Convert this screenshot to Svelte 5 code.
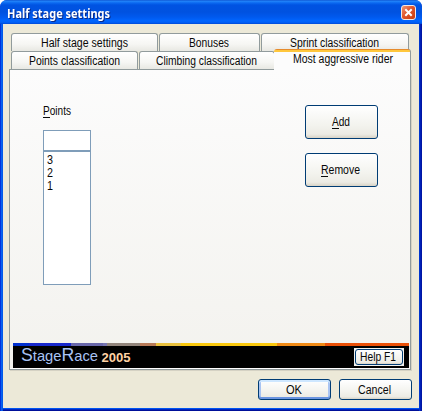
<script>
  const backTabs = [
    { text: 'Half stage settings', w: 147, tw: 87 },
    { text: 'Bonuses', w: 101, tw: 40 },
    { text: 'Sprint classification', w: 148, tw: 89 }
  ];
  const frontTabs = [
    { text: 'Points classification', w: 127, tw: 91 },
    { text: 'Climbing classification', w: 136, tw: 101 }
  ];
  const points = ['3', '2', '1'];
</script>

{#snippet label(text, w, accel = '')}
  <svg class="label" width={w} height="16"><text x="0" y="12" textLength={w} lengthAdjust="spacingAndGlyphs">{accel}{text}</text>{#if accel}<rect x="0" y="14" width="7" height="1" />{/if}</svg>
{/snippet}

<div class="window">
  <header>
    <svg class="title" width="110" height="20"><text x="0" y="13" textLength="103" lengthAdjust="spacingAndGlyphs">Half stage settings</text></svg>
    <button class="close" aria-label="Close">
      <svg width="13" height="13" viewBox="0 0 13 13"><path d="M3.3 3.3 L9.7 9.7 M9.7 3.3 L3.3 9.7" stroke="#fff" stroke-width="2" /></svg>
    </button>
  </header>
  <main>
    <div class="row back">
      {#each backTabs as t}
        <div class="tab" style="width:{t.w}px">{@render label(t.text, t.tw)}</div>
      {/each}
    </div>
    <div class="row front">
      {#each frontTabs as t}
        <div class="tab" style="width:{t.w}px">{@render label(t.text, t.tw)}</div>
      {/each}
      <div class="active">{@render label('Most aggressive rider', 100)}</div>
    </div>
    <section class="panel">
      <div class="body">
        <div class="list">
          {@render label('oints', 28, 'P')}
          <div class="field"></div>
          <div class="items">
            {#each points as p}<div class="item">{@render label(p, 6)}</div>{/each}
          </div>
        </div>
        <div class="actions">
          <button class="btn big">{@render label('dd', 18, 'A')}</button>
          <button class="btn big">{@render label('emove', 39, 'R')}</button>
        </div>
      </div>
      <div class="stripe"></div>
      <div class="brand">
        <svg class="logo" width="120" height="22">
          <text x="0" y="15" textLength="77" lengthAdjust="spacingAndGlyphs"><tspan class="cap">S</tspan>tage<tspan class="cap">R</tspan>ace</text>
          <text class="year" x="80.5" y="16" textLength="29" lengthAdjust="spacingAndGlyphs">2005</text>
        </svg>
        <div class="helpwrap"><button class="btn help">{@render label('Help F1', 36)}</button></div>
      </div>
    </section>
    <footer>
      <button class="btn ok">{@render label('OK', 16)}</button>
      <button class="btn">{@render label('Cancel', 33)}</button>
    </footer>
  </main>
</div>

<style>
  :global(body) { background: #fff; }
  .window {
    box-sizing: border-box;
    width: 422px;
    height: 411px;
    padding: 0 3px 3px;
    border-radius: 7px 7px 0 0;
    background: linear-gradient(90deg, #0031dc 0, #0031dc 1px, #0867f4 1px, #0054e6 3px, #0046dc 419px, #0025c0 420px, #00109a 422px);
    overflow: hidden;
  }
  header {
    box-sizing: border-box;
    height: 24px;
    margin: 0 -3px;
    padding: 5px 6px 0 7px;
    display: flex;
    justify-content: space-between;
    background: linear-gradient(#0848c8 0, #2487fa 1px, #0a68f0 3px, #0053e2 5px, #0052e0 12px, #0059ee 17px, #0066ff 21px, #005bf0 23px, #0045cf 24px);
  }
  .title { font: bold 12.5px "Noto Sans", sans-serif; fill: #fff; overflow: visible; filter: drop-shadow(1px 1px 0 #0a2a88); }
  .close {
    width: 15px;
    height: 15px;
    padding: 0;
    border: 1px solid #f4e8e4;
    border-radius: 3px;
    background: linear-gradient(135deg, #ee9a78, #e0552c 45%, #c93c0c);
  }
  .close svg { display: block; }
  main { height: 384px; background: #ece9d8; display: flex; flex-direction: column; box-shadow: 0 1px #0054f0, 0 2px #0025c0, 0 3px #00109a; }
  .label { display: block; overflow: visible; flex: none; font: 12px "Liberation Sans", Arial, sans-serif; fill: #080808; }
  .row { display: flex; }
  .back { margin: 9px 0 0 8px; gap: 1px; height: 18px; }
  .front { margin-left: 8px; gap: 1px; height: 18px; }
  .tab {
    box-sizing: border-box;
    height: 18px;
    padding: 1px 1px 0 0;
    border: 1px solid #919b9c;
    border-bottom: 0;
    border-radius: 3px 3px 0 0;
    background: linear-gradient(#fff, #f6f6f3 60%, #e8e8e2);
    display: flex;
    justify-content: center;
  }
  .active {
    position: relative;
    box-sizing: border-box;
    width: 137px;
    height: 21px;
    margin: -2px 0 0 -2px;
    padding: 2px 0 0 2px;
    border: solid #919b9c;
    border-width: 0 1px 0 0;
    background: linear-gradient(#e68b2c 1px, #ffc73c 1px, #ffc73c 3px, #fcfcfc 3px);
    border-radius: 3px 3px 0 0;
    display: flex;
    justify-content: center;
  }
  .panel {
    box-sizing: border-box;
    width: 402px;
    height: 301px;
    margin-left: 6px;
    padding: 0 1px 1px 3px;
    border: 1px solid #919b9c;
    background: linear-gradient(#fcfcfc, #f3f2ee 298px, #fff 298px);
    box-shadow: 1px 1px #d5d2c4;
  }
  .body { height: 273px; display: flex; justify-content: space-between; }
  .list { padding: 33px 0 0 30px; }
  .field, .items { box-sizing: border-box; width: 48px; border: 1px solid #7f9db9; background: #fff; }
  .field { height: 21px; margin-top: 11px; }
  .items { height: 134px; padding: 0 0 0 3px; }
  .item { height: 13px; }
  .item :global(svg) { height: 13px; }
  .actions { padding: 35px 31px 0 0; display: flex; flex-direction: column; gap: 14px; }
  .btn {
    box-sizing: border-box;
    width: 73px;
    height: 21px;
    padding: 0 2px 0 0;
    border: 1px solid #003c74;
    border-radius: 3px;
    background: linear-gradient(#fff, #f3f3ee 60%, #ecebe4 88%, #d8d3c6);
    display: flex;
    align-items: center;
    justify-content: center;
  }
  .big { height: 34px; }
  .stripe {
    height: 3px;
    background: linear-gradient(90deg, #0030d0 0 16px, #1828cc 16px 58px, #6967aa 58px 90px, #7775b0 90px 94px, #92857c 94px 127px, #b87a58 127px 143px, #eac13e 143px 168px, #fac80e 168px 264px, #f08a16 264px 312px, #ea5008 312px);
  }
  .brand { height: 22px; background: #000; display: flex; justify-content: space-between; }
  .logo { margin-left: 8px; font: 15px "Liberation Sans", sans-serif; fill: #a9c3f4; overflow: visible; }
  .cap { font-size: 18px; }
  .year { font-weight: bold; font-size: 13px; fill: #ffd2a4; }
  .helpwrap { box-sizing: border-box; width: 50px; height: 18px; margin: 2px 5px 0 0; padding: 1px; background: #f3f2ee; }
  .help { width: 48px; height: 16px; }
  footer { margin: 9px 7px 0 0; display: flex; justify-content: flex-end; gap: 8px; }
  .ok { box-shadow: inset 0 2px #cee7ff, inset 0 -2px #6a94e0, inset 2px 0 #a9c4f2, inset -2px 0 #a9c4f2; }
</style>
